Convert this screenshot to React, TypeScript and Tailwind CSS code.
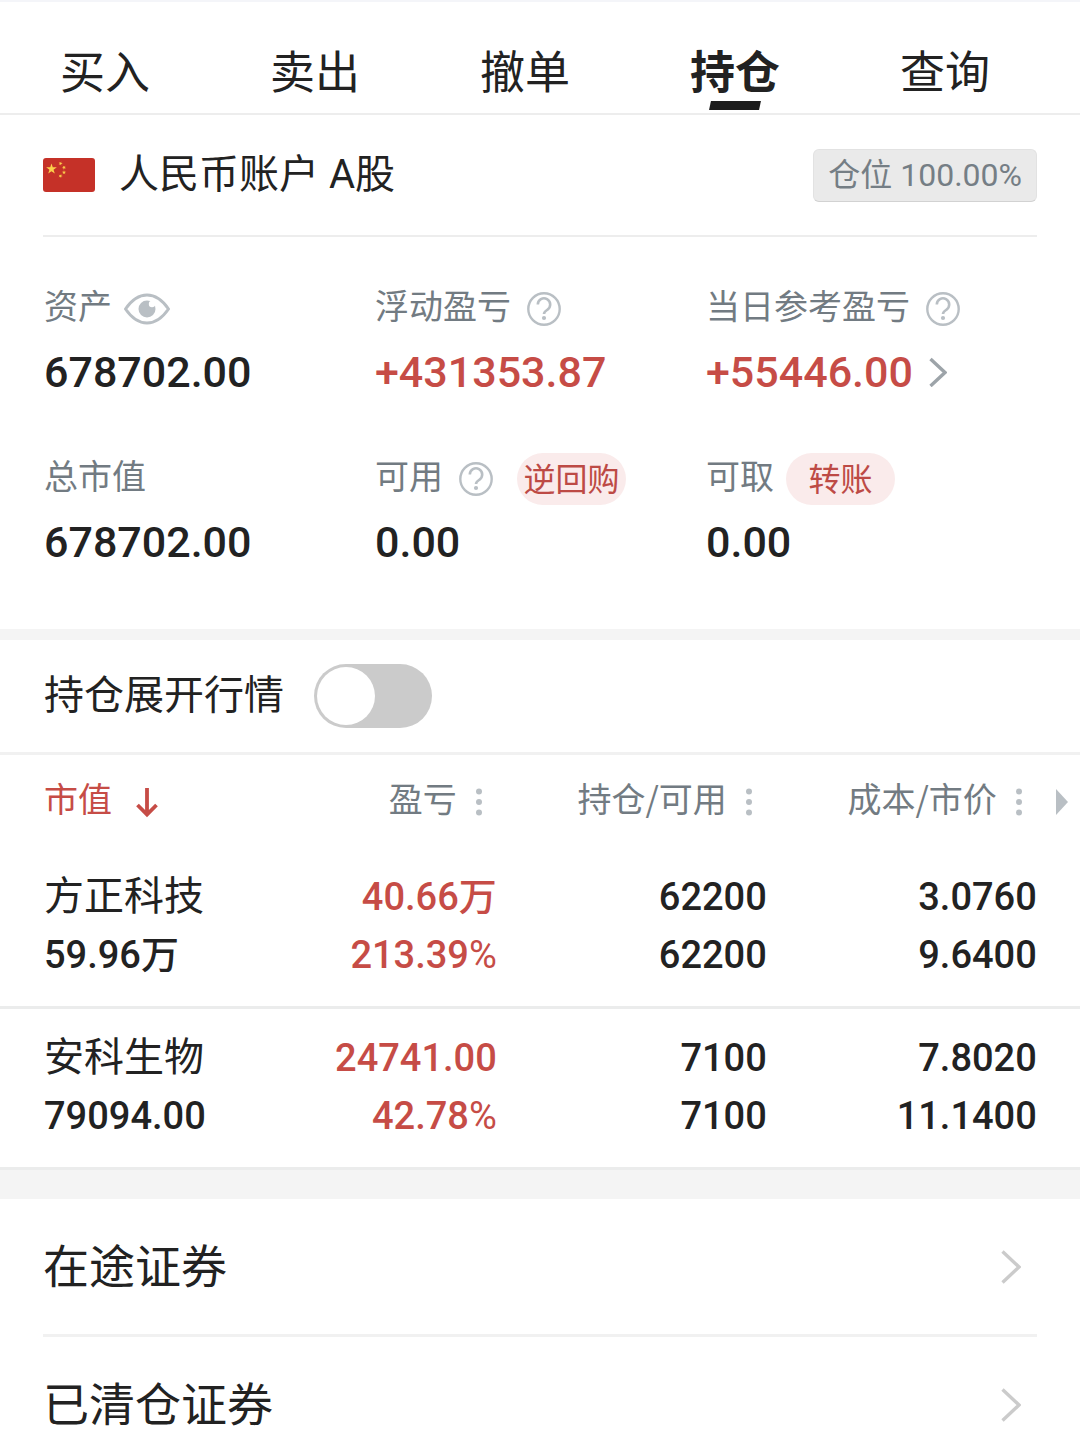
import { useState } from "react";

const tabs = ["买入", "卖出", "撤单", "持仓", "查询"];

const columns = ["盈亏", "持仓/可用", "成本/市价"];

const holdings = [
  {
    name: "方正科技",
    value: "59.96万",
    profit: "40.66万",
    percent: "213.39",
    amount: "62200",
    available: "62200",
    cost: "3.0760",
    price: "9.6400",
  },
  {
    name: "安科生物",
    value: "79094.00",
    profit: "24741.00",
    percent: "42.78",
    amount: "7100",
    available: "7100",
    cost: "7.8020",
    price: "11.1400",
  },
];

const links = ["在途证券", "已清仓证券"];

const star = "M0 -1L0.225 -0.309L0.951 -0.309L0.363 0.118L0.588 0.809L0 0.382L-0.588 0.809L-0.363 0.118L-0.951 -0.309L-0.225 -0.309Z";

function Flag() {
  return (
    <svg viewBox="0 0 52 34" className="w-[52px] h-[34px] shrink-0" role="img" aria-label="中国">
      <rect width="52" height="34" rx="3" fill="#c53128" />
      <g fill="#fbd04b">
        <path d={star} transform="translate(8.5 11) scale(5.6)" />
        <path d={star} transform="translate(17.5 5.5) rotate(20) scale(2.2)" />
        <path d={star} transform="translate(21 9.5) rotate(40) scale(2.2)" />
        <path d={star} transform="translate(21 14.5) scale(2.2)" />
        <path d={star} transform="translate(17.5 18) rotate(20) scale(2.2)" />
      </g>
    </svg>
  );
}

function EyeIcon() {
  return (
    <svg viewBox="0 0 46 32" className="w-[46px] h-8" fill="none">
      <path
        d="M1.5 16C8 6.500 15 2 23 2s15 4.500 21.500 14C38 25.500 31 30 23 30S8 25.500 1.500 16Z"
        stroke="#b9bfc4"
        strokeWidth="3"
        strokeLinejoin="round"
      />
      <circle cx="23" cy="16" r="8.500" fill="#b9bfc4" />
      <circle cx="28" cy="11" r="3.200" fill="#fff" />
    </svg>
  );
}

function HelpButton({ label }: { label: string }) {
  return (
    <button type="button" aria-label={`${label}说明`}>
      <svg viewBox="0 0 34 34" className="w-[34px] h-[34px]" fill="none" stroke="#b9bfc4">
        <circle cx="17" cy="17" r="15.700" strokeWidth="2.400" />
        <path d="M10.800 12.500a6.200 6.200 0 1 1 9.500 5.300c-2.200 1.400-3.300 2-3.300 4.200" strokeWidth="2.600" />
        <circle cx="17" cy="26" r="2.100" fill="#b9bfc4" stroke="none" />
      </svg>
    </button>
  );
}

function Dots() {
  return (
    <svg viewBox="0 0 8 28" className="w-2 h-7" fill="#b9bfc4">
      <circle cx="4" cy="3.500" r="3" />
      <circle cx="4" cy="14" r="3" />
      <circle cx="4" cy="24.500" r="3" />
    </svg>
  );
}

function Label({ children }: { children: string }) {
  return <span className="pb-2 text-[34px] leading-[44px] text-[#727b82]">{children}</span>;
}

function Pill({ children }: { children: string }) {
  return (
    <button type="button" className="w-[109px] h-[52px] pb-1 rounded-full bg-[#faebeb] text-[32px] leading-[46px] text-[#bd4a45]">
      {children}
    </button>
  );
}

function Value({ children, red }: { children: string; red?: boolean }) {
  return (
    <span className={`font-[Roboto,sans-serif] font-medium text-[43px] leading-[58px] ${red ? "text-[#c64c46]" : "text-[#222]"}`}>
      {children}
    </span>
  );
}

export default function App() {
  const [active, setActive] = useState("持仓");
  const [expanded, setExpanded] = useState(false);

  return (
    <div className="bg-white text-[#222] font-['Noto_Sans_CJK_SC',sans-serif] border-t-2 border-[#f4f5f9]">
      <nav className="grid grid-cols-5 pt-[39px] pb-[3px] pr-[30px] border-b-2 border-[#ededed]">
        {tabs.map((tab) => (
          <button
            key={tab}
            type="button"
            onClick={() => setActive(tab)}
            className="flex flex-col items-center gap-0.5"
          >
            <span className={`text-[45px] leading-[58px] ${tab === active ? "font-bold" : ""}`}>{tab}</span>
            <span className={`w-[50px] h-[9px] -skew-x-12 ${tab === active ? "bg-[#1c1c1c]" : ""}`} />
          </button>
        ))}
      </nav>

      {/* Account */}
      <section className="px-[43px] pb-[58px]">
        <div className="flex items-center justify-between h-[122px] border-b-2 border-[#ededed]">
          <div className="flex items-center gap-6">
            <Flag />
            <h1 className="font-[Roboto,'Noto_Sans_CJK_SC',sans-serif] text-[40px] leading-[52px]">人民币账户 A股</h1>
          </div>
          <span className="px-[14px] rounded-md border border-[#e2e2e2] border-b-[#d2d2d2] bg-[#eaeaea] font-[Roboto,'Noto_Sans_CJK_SC',sans-serif] text-[32px] leading-[51px] text-[#757e85]">
            仓位 100.00%
          </span>
        </div>

        <div className="grid grid-cols-3 gap-y-[52px] pt-[46px] pl-px">
          <div className="flex flex-col gap-2">
            <div className="flex items-center gap-3 h-[52px]">
              <Label>资产</Label>
              <button type="button" aria-label="隐藏资产">
                <EyeIcon />
              </button>
            </div>
            <Value>678702.00</Value>
          </div>
          <div className="flex flex-col gap-2">
            <div className="flex items-center gap-4 h-[52px]">
              <Label>浮动盈亏</Label>
              <HelpButton label="浮动盈亏" />
            </div>
            <Value red>+431353.87</Value>
          </div>
          <div className="flex flex-col gap-2">
            <div className="flex items-center gap-4 h-[52px]">
              <Label>当日参考盈亏</Label>
              <HelpButton label="当日参考盈亏" />
            </div>
            <a href="#today" className="flex items-center gap-4">
              <Value red>+55446.00</Value>
              <svg viewBox="0 0 18 30" className="w-[18px] h-[30px]" fill="none" stroke="#9da4a9" strokeWidth="3.400">
                <path d="M1.500 2L16 15.500L1.500 29" />
              </svg>
            </a>
          </div>
          <div className="flex flex-col gap-2">
            <div className="flex items-center h-[52px]">
              <Label>总市值</Label>
            </div>
            <Value>678702.00</Value>
          </div>
          <div className="flex flex-col gap-2">
            <div className="flex items-center gap-6 h-[52px]">
              <div className="flex items-center gap-4">
                <Label>可用</Label>
                <HelpButton label="可用" />
              </div>
              <Pill>逆回购</Pill>
            </div>
            <Value>0.00</Value>
          </div>
          <div className="flex flex-col gap-2">
            <div className="flex items-center gap-3 h-[52px]">
              <Label>可取</Label>
              <Pill>转账</Pill>
            </div>
            <Value>0.00</Value>
          </div>
        </div>
      </section>

      {/* Quote switch */}
      <div className="flex items-center gap-[30px] h-[126px] px-11 border-t-[11px] border-b-[3px] border-t-[#f4f4f4] border-b-[#f1f1f1]">
        <label htmlFor="expand" className="pb-2 text-[40px] leading-[54px]">
          持仓展开行情
        </label>
        <input
          id="expand"
          type="checkbox"
          role="switch"
          checked={expanded}
          onChange={(e) => setExpanded(e.target.checked)}
          className="appearance-none flex items-center w-[118px] h-16 px-[3px] rounded-full bg-[#cbcbcb] checked:justify-end checked:bg-[#c64c46] before:block before:w-[58px] before:h-[58px] before:rounded-full before:bg-white"
        />
      </div>

      {/* Holdings */}
      <table className="w-full table-fixed">
        <colgroup>
          <col className="w-[21%]" />
          <col className="w-[25%]" />
          <col className="w-[25%]" />
          <col className="w-[25%]" />
          <col className="w-[4%]" />
        </colgroup>
        <thead>
          <tr className="h-[93px] text-[34px] leading-[44px] text-[#727b82]">
            <th className="p-0 pl-11 font-normal">
              <button type="button" className="flex items-center gap-6 text-[#c64c46]">
                <span className="pb-2">市值</span>
                <svg viewBox="0 0 22 32" className="w-[22px] h-8" fill="none" stroke="#c64c46" strokeWidth="3.800">
                  <path d="M11 2V28M1.500 19L11 28.500L20.500 19" />
                </svg>
              </button>
            </th>
            {columns.map((column) => (
              <th key={column} className="p-0 pr-[14px] font-normal">
                <button type="button" className="flex items-center gap-[18px] ml-auto whitespace-nowrap">
                  <span className="pb-2">{column}</span>
                  <Dots />
                </button>
              </th>
            ))}
            <th className="p-0 pl-[19px]">
              <svg viewBox="0 0 12 26" className="w-3 h-[26px]" fill="#b9bfc4">
                <path d="M0 0L12 13L0 26Z" />
              </svg>
            </th>
          </tr>
        </thead>
        <tbody className="font-[Roboto,'Noto_Sans_CJK_SC',sans-serif] font-medium text-[38px] leading-[58px] text-right">
          {holdings.map((h) => (
            <tr key={h.name} className="border-b-[3px] border-[#ebecec]">
              <td className="p-0 pt-5 pb-[22px] pl-11 text-left whitespace-nowrap">
                <div className="font-normal text-[40px]">{h.name}</div>
                <div>{h.value}</div>
              </td>
              <td className="p-0 pt-5 pb-[22px] text-[#c64c46]">
                <div>{h.profit}</div>
                <div>
                  {h.percent}
                  <span className="font-normal">%</span>
                </div>
              </td>
              <td className="p-0 pt-5 pb-[22px]">
                <div>{h.amount}</div>
                <div>{h.available}</div>
              </td>
              <td className="p-0 pt-5 pb-[22px]">
                <div>{h.cost}</div>
                <div>{h.price}</div>
              </td>
              <td className="p-0" />
            </tr>
          ))}
        </tbody>
      </table>

      <div className="px-[43px] border-t-[29px] border-[#f4f4f4]">
        {links.map((link) => (
          <a
            key={link}
            href="#securities"
            className="flex items-center justify-between pt-[38px] pb-[37px] pr-4 border-b-[3px] border-[#f1f1f1] last:border-b-0 last:pb-2"
          >
            <span className="pb-2 text-[46px] leading-[52px]">{link}</span>
            <svg viewBox="0 0 20 34" className="w-5 h-[34px]" fill="none" stroke="#cbcbcb" strokeWidth="3.400">
              <path d="M1.500 1.500L18 17L1.500 32.500" />
            </svg>
          </a>
        ))}
      </div>
    </div>
  );
}
